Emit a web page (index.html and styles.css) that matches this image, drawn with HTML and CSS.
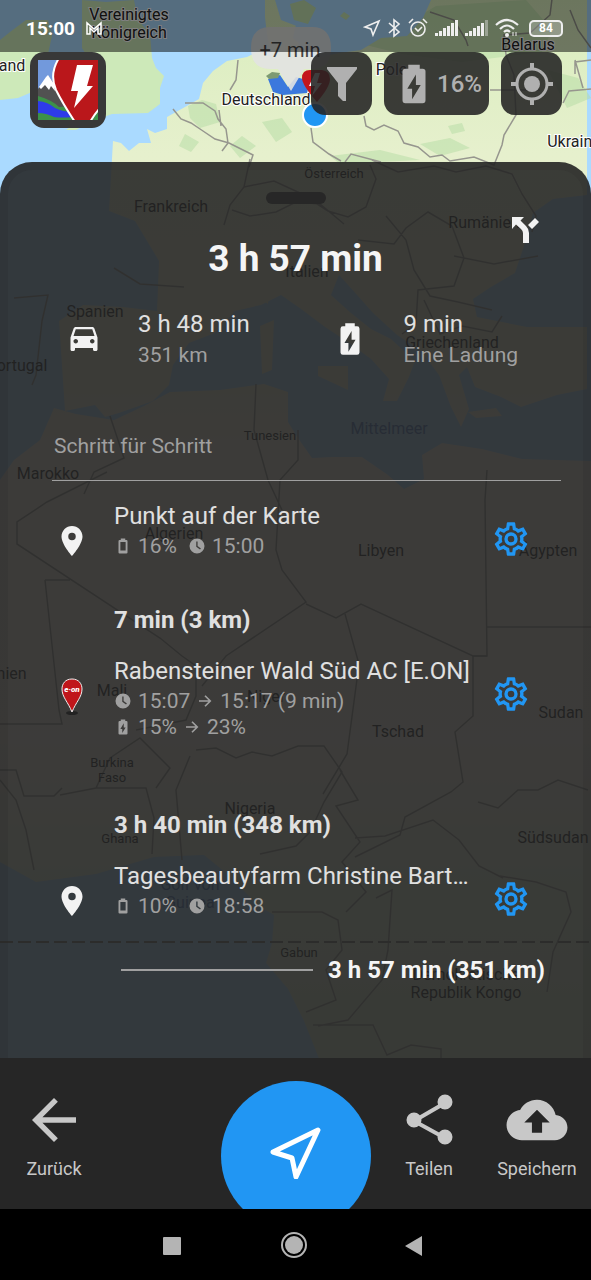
FILE: index.html
```html
<!DOCTYPE html>
<html lang="de">
    <head>
        <meta charset="utf-8">
        <meta name="viewport" content="width=device-width, initial-scale=1">
        <title>Route</title>
        <link rel="stylesheet" href="styles.css">
    </head>
    <body>
        <!-- shared icons -->
        <svg class="sprite" aria-hidden="true">
            <symbol id="gear" viewBox="0 0 24 24">
                <path d="M12 8a4 4 0 0 1 4 4 4 4 0 0 1-4 4 4 4 0 0 1-4-4 4 4 0 0 1 4-4m0 2a2 2 0 0 0-2 2 2 2 0 0 0 2 2 2 2 0 0 0 2-2 2 2 0 0 0-2-2m-2 12c-.25 0-.46-.18-.5-.42l-.37-2.65c-.63-.25-1.17-.59-1.69-.99l-2.49 1.01c-.22.08-.49 0-.61-.22l-2-3.46c-.13-.22-.07-.49.12-.64l2.11-1.66L4.5 12l.07-1-2.11-1.63c-.19-.15-.25-.42-.12-.64l2-3.46c.12-.22.39-.31.61-.22l2.49 1c.52-.39 1.06-.73 1.69-.98l.37-2.65c.04-.24.25-.42.5-.42h4c.25 0 .46.18.5.42l.37 2.65c.63.25 1.17.59 1.69.98l2.49-1c.22-.09.49 0 .61.22l2 3.46c.13.22.07.49-.12.64L19.43 11l.07 1-.07 1 2.11 1.63c.19.15.25.42.12.64l-2 3.46c-.12.22-.39.31-.61.22l-2.49-1c-.52.39-1.06.73-1.69.98l-.37 2.65c-.04.24-.25.42-.5.42h-4m1.25-18-.37 2.61c-1.2.25-2.26.89-3.03 1.78L5.44 7.35l-.75 1.3L6.8 10.2a5.55 5.55 0 0 0 0 3.6l-2.12 1.56.75 1.3 2.43-1.04c.77.88 1.82 1.52 3.01 1.76l.37 2.62h1.52l.37-2.61c1.19-.25 2.24-.89 3.01-1.77l2.43 1.04.75-1.3-2.12-1.55c.4-1.17.4-2.44 0-3.61l2.11-1.55-.75-1.3-2.41 1.04a5.42 5.42 0 0 0-3.03-1.77L12.75 4h-1.5Z"/>
            </symbol>
            <symbol id="pin" viewBox="0 0 24 24">
                <path d="M12 2C8.130 2 5 5.130 5 9c0 5.250 7 13 7 13s7-7.750 7-13c0-3.870-3.130-7-7-7zm0 9.500a2.500 2.500 0 1 1 0-5 2.500 2.500 0 0 1 0 5z"/>
            </symbol>
            <symbol id="charge" viewBox="0 0 24 24">
                <path fill-rule="evenodd" d="M16.500 4H15V2H9v2H7.500Q6 4 6 5.500v15Q6 22 7.500 22h9q1.500 0 1.500-1.500v-15Q18 4 16.500 4zM11 20v-5.500H8.500L13 7v5.500h2.500z"/>
            </symbol>
            <symbol id="battery" viewBox="0 0 24 24">
                <path fill-rule="evenodd" d="M16.500 4H15V2H9v2H7.500Q6 4 6 5.500v15Q6 22 7.500 22h9q1.500 0 1.500-1.500v-15Q18 4 16.500 4zM8.500 6.500h7V18h-7z"/>
            </symbol>
            <symbol id="clock" viewBox="0 0 24 24">
                <path fill-rule="evenodd" d="M12 2a10 10 0 1 0 0 20 10 10 0 0 0 0-20zM11 6h1.800v6l4.400 3.300-1.200 1.500-5-3.900z"/>
            </symbol>
            <symbol id="arrow" viewBox="0 0 24 24">
                <path d="M4 12h15M12 5l7 7-7 7" fill="none" stroke="currentColor" stroke-width="2.200"/>
            </symbol>
            <symbol id="signal" viewBox="0 0 24 18">
                <path d="M0 14h3v3H0zM4 12h3v5H4zM8 9h3v8H8zM12 7h3v10h-3zM16 4h3v13h-3z"/>
            </symbol>
        </svg>

        <svg class="map" viewBox="0 0 591 1280" preserveAspectRatio="xMidYMin slice">
            <defs>
                <linearGradient id="land" x1="0" y1="0" x2="0" y2="1280" gradientUnits="userSpaceOnUse">
                    <stop offset="0" stop-color="#d9edbd"/>
                    <stop offset=".12" stop-color="#e6f0cd"/>
                    <stop offset=".29" stop-color="#ebedcb"/>
                    <stop offset=".36" stop-color="#f5eddc"/>
                    <stop offset=".58" stop-color="#f7eee0"/>
                    <stop offset=".68" stop-color="#dfead0"/>
                    <stop offset=".84" stop-color="#d2e3c1"/>
                </linearGradient>
            </defs>
            <rect width="591" height="1280" fill="#aadaff"/>
            <g fill="url(#land)">
                <!-- British Isles -->
                <path fill="#cde9b9" d="M0 40l10-8 16-12 22 0 4 16-4 18-12 20-4 18-14 6-18 2zM82 0l24 2 28-2 4 20 12 14 2 24 4 10 8 8-4 12 0 16-12 9-36 1-22 8-14 8-10 0 16-12 10-6-14-4 6-14 14-6-10-10 4-14-10-16 0-14z"/>
                <!-- continental Europe -->
                <path d="M113 141l8 2 8 8 10-8 12 0-4-14 8 4 12-4 0-12 18-10 14-8 4-16 10-12 14-10 20-4 12-6 12 6-4-22-2-18 0-17 28 0 4 20-4 18 14 12 22-2 26-12 20 2 28-14 12-30 6-14h166v215l-34 4-20 14-8 30-10 30-24 14-18 12 4 18 50 10 60 0v62l-30 6-36 12-20-10-26-10-8-20-8 8 10 34-8 18-10-20-12-32-18-24-24-16-24-22-16-18-18-20-8 20 20 18 20 16 20 10 24 22-6 16-12 24-14 0 6-22-18-20-22-16-24-16-24-18-20-14-20 10-26 6-20 22-26 10-16 22-4 20-16 16-34 12-14 4-10-12-30 6-6-90 24-16 40 2 34 4 2-50-24-40-26-10z"/>
                <!-- islands -->
                <path d="M260 326l14-6-2 50-10 4zM318 366l30 0 0 24-30-14zM262 284l8 4-2 16-6-4zM468 412l28-4 6 8-26 2z"/>
                <!-- Africa -->
                <path d="M54 408l22 6 38 6 30-14 26-14 50-2 44-6 24 8 0 30 10 16 14 20 20-1 30 0 26 18 16 14 20-10-2-24 20-12 40 6 40 10 69 2v600H320l-16-40-16-32-22-26 6-20 2-28-14-8-34-34-22-18-50 2-58 17-60 8-36-20V480l14-20 26-20z"/>
            </g>
            <g fill="#b3dca4" opacity=".5">
                <path d="M188 106l14-6 14 4 4 18-20 6-10-10zM262 122l20-4 10 14-16 10zM346 40l50-10 40-24 90-6 26 30-10 22-80 10-60-8zM420 144l30-6 20 10-30 8zM330 156l50-6 40 10-80 4zM548 70l30 8 13 20-24 10zM448 126l14-3 3 8-13 3zM185 134l14 8-8 10-12-6zM230 146l12-10 14 10-16 12z"/>
            </g>
            <path fill="#aadaff" d="M275 0h156l-8 18-16 18-26 2-20 12-22 3-24 5-18-10 10-18-26-10z"/>
            <path fill="#c4e2b0" d="M290 4l14-4 12 8-8 16-14-4zM340 16l4-4 6 4-4 4z"/>
            <g class="borders">
                <path d="M185 103l18 0 12 8 3 8 8 10 2 14-6 8M173 109l8 10 10 4 12 8 12 8 14 4 24 12-4 12M238 60l-2 20-6 10M219 110l2 16M364 116l2 10 8 4 10-5 14 6 6 12 14 4 12 10 12-2 8 6 24-4 20 8 8-20 2-10 12-20-2-40-8-20-2-20 26-2 20-18 2-16 8-14M430 12l24 8 12 20 2 6M311 128l2 14 16 12 12 7M345 162l6-8 30 8M490 90l50 0M563 103l6-12 22-2M575 74l0-12 16-2M570 10l8 20 13 18M575 60l8 28"/>
                <path d="M224 225l6-20 14-18 6-28M232 210l18 6 26-4 20-10 24 2 24 20M244 187l30-6 26 12 28 18 20 6 18-10 10-28-6-14M372 160l26 12 36-6 22 6 30-6 26 8 10 20 14 22-4 16M358 240l36 4 12-16 22-16 24 14 12 32-10 28-36 4-2 34-14 10M386 216l20 24 8 30 16 26 28 6 34 8M454 256l40 8 44-8M424 300l16 34 22-8 30 6 10-16M114 268l26 16 44 3M14 298l34-3-6 26-6 54-4 10M110 416l14 42-30 14-10 22M256 384l-2 46 14 50 14 30M298 430v30l-18 20-4 70 6 20 24 32-80 54-24 30M182 656l-22-18L17 544V522l30-20 60-30M45 580h25M45 580l14 130 3 14H0M487 470l-2 30 2 156h-14l-112-52-25 14-30-14M487 627h104M345 614l14 50-12 90-24 40M182 656l14 10v30l-10 24-50 10"/>
                <path d="M487 656l-14 0 0 60-18 16 8 50-12 10-46 25-5 18-45 22M196 750l20-2 20 10 16-6 20 4 26-10 26 0 18 26-18 30-14 30-14 14-36 8M182 860l-6-70 14-34M96 788h50l8 30-2 36M60 795l36-7 14-30 30-20 30 30-14 20M0 770l16 0 8 26 30 0 8-8 M0 780l16 20 10 30 8 40M340 770l18 30-22 6 24 36-18 20 24 30-20 20M355 838l30-2 48-16 26 20 20 26 24 12M376 898l16-8-4 60-6 30-34 40-30 6M272 912l50 0 16 8 4 30-16 20 10 30-30 12M313 1025l60 0 14 30 24-10 30 4v20M500 876l36 6 30 10 5 20-18 40-6 40M478 802l20 6 20-18 20 0 20-10 30 10"/>
            </g>
            <path class="equator" d="M0 942h591"/>
            <!-- country names -->
            <g class="country halo">
                <text x="129" y="20">Vereinigtes</text>
                <text x="129" y="38">Königreich</text>
                <text x="12" y="71">and</text>
                <text x="528" y="50">Belarus</text>
                <text x="266" y="105">Deutschland</text>
                <text x="396" y="75">Polen</text>
                <text x="574" y="147">Ukraine</text>
            </g>
            <g class="country">
                <text x="171" y="212">Frankreich</text>
                <text x="484" y="228">Rumänien</text>
                <text x="307" y="277">Italien</text>
                <text x="95" y="317">Spanien</text>
                <text x="452" y="348">Griechenland</text>
                <text x="17" y="371">Portugal</text>
                <text x="48" y="479">Marokko</text>
                <text x="174" y="539">Algerien</text>
                <text x="381" y="556">Libyen</text>
                <text x="548" y="556">Ägypten</text>
                <text x="112" y="696">Mali</text>
                <text x="266" y="702">Niger</text>
                <text x="398" y="737">Tschad</text>
                <text x="561" y="718">Sudan</text>
                <text x="-18" y="679">Mauretanien</text>
                <text x="250" y="814">Nigeria</text>
                <text x="553" y="843">Südsudan</text>
                <text x="466" y="980">Demokratische</text>
                <text x="466" y="998">Republik Kongo</text>
                <text class="sea" x="389" y="434">Mittelmeer</text>
                <text class="sea" x="190" y="890">Golf von</text>
                <text class="sea" x="190" y="908">Guinea</text>
            </g>
            <g class="country small">
                <text x="334" y="178">Österreich</text>
                <text x="270" y="440">Tunesien</text>
                <text x="112" y="767">Burkina</text>
                <text x="112" y="782">Faso</text>
                <text x="120" y="843">Ghana</text>
                <text x="299" y="957">Gabun</text>
            </g>
            <!-- route markers -->
            <path fill="#3b78dd" d="M268 79l12-4 8 12 8-10 14 4-3 12-24 2-10-3z"/>
            <path fill="#7d9b72" d="M266 76l6-4 8 1-2 5-9 1z"/>
            <path fill="#c4161c" d="M302 78q0-8 8-8h12q8 1 8 9 0 8-13 23-15-17-15-24z"/>
            <path fill="#fff" d="M315 73l-6 13h6l-3 10 10-13h-5l3-10z"/>
            <circle cx="315" cy="115" r="12" fill="#2196f3" stroke="#fff" stroke-width="2"/>
            <path class="bubble" d="M270 27h42q19 0 19 21t-19 21h-8L291 91l-13-22h-8q-19 0-19-21t19-21z"/>
            <text class="delay" x="290" y="57">+7 min</text>
        </svg>

        <header class="status">
            <span class="time">15:00</span>
            <svg class="mail" width="18" height="14" viewBox="0 0 18 14"><path d="M2 13V2l7 6 7-6v11h-3V7l-4 4-4-4v6z" fill="none" stroke="#fff" stroke-width="1.500"/></svg>
            <div class="status-icons">
                <svg width="18" height="18" viewBox="0 0 18 18"><path d="M2 8L16 2l-6 14-2-6z" fill="none" stroke="#eee" stroke-width="1.600"/></svg>
                <svg width="13" height="20" viewBox="0 0 13 20"><path d="M1 5l10 9-5 4V2l5 4-10 9" fill="none" stroke="#eee" stroke-width="1.600"/></svg>
                <svg width="20" height="20" viewBox="0 0 20 20"><g fill="none" stroke="#eee" stroke-width="1.600"><circle cx="10" cy="11" r="7"/><path d="M1 5l4-4M19 5l-4-4M7 10l3 3 4-4"/></g></svg>
                <svg width="23" height="18" viewBox="0 0 23 18" fill="#eee"><use href="#signal" width="24" height="18"/><path d="M20 1h3v16h-3z"/></svg>
                <svg width="23" height="18" viewBox="0 0 23 18" fill="#eee"><use href="#signal" width="24" height="18"/><path opacity=".4" d="M20 1h3v16h-3z"/></svg>
                <svg width="25" height="20" viewBox="0 0 25 20"><g fill="none" stroke="#eee" stroke-width="2.200"><path d="M1 7q11-10 22 0M5 11q7-7 14 0M9 14q3-3 6 0"/><path stroke-width="1" d="M18 14v4M21 14v4"/></g><circle cx="12" cy="17" r="2" fill="#eee"/></svg>
                <span class="level">84</span>
            </div>
        </header>

        <div class="tools">
            <button class="logo" aria-label="Menü">
                <svg width="60" height="60" viewBox="0 0 60 60">
                    <rect width="60" height="60" fill="#7299dc"/>
                    <path fill="#515151" d="M0 29L10 16l8 10 16 22-14 2L0 38z"/>
                    <path fill="#fff" d="M1 27l7-10 2-2 6 9 1 7-4-5-2 4-4-5-4 4z"/>
                    <path fill="#3d9149" d="M0 36q14 4 21 11l14-1v14H0z"/>
                    <path fill="#2e3bea" d="M0 41q10 1 17 7 8 4 18 4v5q-12 1-19 0-8-4-16-4z"/>
                    <path fill="#3d9149" d="M60 46v14H48z"/>
                    <path fill="#ba171b" stroke="#fff" stroke-width="2" d="M21-2q-10 16-3 32 7 14 19 32h15q4-7 10-14V-2z"/>
                    <path fill="#fff" d="M39 5h16l-6 21h6L36 48l4-17h-7z"/>
                </svg>
            </button>
            <button class="tool" aria-label="Filter">
                <svg width="30" height="34" viewBox="0 0 30 34" fill="#b0b0b0"><path d="M0 0h30v2L19 16v18h-3l-5-5V16L0 2z"/></svg>
            </button>
            <button class="tool">
                <svg width="46" height="46" viewBox="0 0 24 24" fill="#b0b0b0"><use href="#charge"/></svg>
                <span>16%</span>
            </button>
            <button class="tool" aria-label="Standort">
                <svg width="42" height="42" viewBox="0 0 42 42"><g fill="none" stroke="#b0b0b0" stroke-width="3"><circle cx="21" cy="21" r="15"/><path d="M21 0v7M21 35v7M0 21h7M35 21h7" stroke-width="4"/></g><circle cx="21" cy="21" r="8" fill="#b0b0b0"/></svg>
            </button>
        </div>

        <main class="panel">
            <div class="handle"></div>
            <button class="alternatives" aria-label="Alternative Routen">
                <svg width="28" height="28" viewBox="0 0 28 28" fill="#f2f2f2"><path d="M1 1h12L9.500 4.500 15 10q3 3 3 7v10h-6V17q0-2-2-4L5 8.500 1 13zM17 9l7-7 4 4-7 7z"/></svg>
            </button>
            <h1>3 h 57 min</h1>

            <div class="summary">
                <div class="fact">
                    <svg width="36" height="36" viewBox="0 0 24 24" fill="#f2f2f2"><path d="M18.920 5.010C18.720 4.420 18.160 4 17.500 4h-11c-.660 0-1.210.420-1.420 1.010L3 11v8c0 .550.450 1 1 1h1c.550 0 1-.450 1-1v-1h12v1c0 .550.450 1 1 1h1c.550 0 1-.450 1-1v-8l-2.080-5.990zM6.500 15c-.830 0-1.500-.670-1.500-1.500S5.670 12 6.500 12s1.500.670 1.500 1.500S7.330 15 6.500 15zm11 0c-.830 0-1.500-.670-1.500-1.500s.670-1.500 1.500-1.500 1.500.670 1.500 1.500-.670 1.500-1.500 1.500zM5 10l1.500-4.500h11L19 10H5z"/></svg>
                    <p>3 h 48 min<small>351 km</small></p>
                </div>
                <div class="fact">
                    <svg width="38" height="38" fill="#f2f2f2"><use href="#charge"/></svg>
                    <p>9 min<small>Eine Ladung</small></p>
                </div>
            </div>

            <h2>Schritt für Schritt</h2>

            <div class="stop">
                <svg class="marker" width="36" height="36"><use href="#pin"/></svg>
                <div class="info">
                    <h3>Punkt auf der Karte</h3>
                    <p><svg class="icon"><use href="#battery"/></svg>16% <svg class="icon second"><use href="#clock"/></svg>15:00</p>
                </div>
                <button class="settings" aria-label="Einstellungen"><svg width="40" height="40"><use href="#gear"/></svg></button>
            </div>
            <p class="leg">7 min (3 km)</p>

            <div class="stop charging">
                <svg class="marker" width="26" height="38" viewBox="0 0 26 38">
                    <ellipse cx="13" cy="35" rx="6" ry="2" fill="#222"/>
                    <path fill="#c0161b" stroke="#eee" d="M13 1C6 1 3 6 3 11c0 8 6 13 10 23 4-10 10-15 10-23 0-5-3-10-10-10z"/>
                    <text class="brand" x="13" y="14">e·on</text>
                </svg>
                <div class="info">
                    <h3>Rabensteiner Wald Süd AC [E.ON]</h3>
                    <p><svg class="icon"><use href="#clock"/></svg>15:07 <svg class="to"><use href="#arrow"/></svg> 15:17 (9 min)</p>
                    <p><svg class="icon"><use href="#charge"/></svg>15% <svg class="to"><use href="#arrow"/></svg> 23%</p>
                </div>
                <button class="settings" aria-label="Einstellungen"><svg width="40" height="40"><use href="#gear"/></svg></button>
            </div>
            <p class="leg">3 h 40 min (348 km)</p>

            <div class="stop">
                <svg class="marker" width="36" height="36"><use href="#pin"/></svg>
                <div class="info">
                    <h3>Tagesbeautyfarm Christine Bartholomäus</h3>
                    <p><svg class="icon"><use href="#battery"/></svg>10% <svg class="icon second"><use href="#clock"/></svg>18:58</p>
                </div>
                <button class="settings" aria-label="Einstellungen"><svg width="40" height="40"><use href="#gear"/></svg></button>
            </div>
            <p class="total">3 h 57 min (351 km)</p>
        </main>

        <nav class="actions">
            <button class="action">
                <svg width="66" height="66" viewBox="0 0 24 24"><path fill="#c8c8c8" d="M20 11H7.800l5.600-5.600L12 4l-8 8 8 8 1.400-1.400L7.800 13H20z"/></svg>
                Zurück
            </button>
            <button class="start" aria-label="Navigation starten">
                <svg width="52" height="52" viewBox="0 0 52 52"><path d="M3 25L48 3 26 50l-4-19z" fill="none" stroke="#fff" stroke-width="5" stroke-linejoin="round"/></svg>
            </button>
            <div class="right">
                <button class="action">
                    <svg width="66" height="66" viewBox="0 0 66 66"><g fill="#c8c8c8" stroke="#c8c8c8" stroke-width="4"><path d="M49 16L18 34l31 17" fill="none"/><circle cx="49" cy="15" r="5.500"/><circle cx="18" cy="33" r="5.500"/><circle cx="49" cy="50" r="5.500"/></g></svg>
                    Teilen
                </button>
                <button class="action">
                    <svg width="66" height="66" viewBox="0 0 26 26"><path fill="#c8c8c8" d="M20.350 11.040C19.670 7.590 16.640 5 13 5c-2.890 0-5.400 1.640-6.650 4.040C3.340 9.360 1 11.910 1 15c0 3.310 2.690 6 6 6h13c2.760 0 5-2.240 5-5 0-2.640-2.050-4.780-4.650-4.960zM15 14v4h-4v-4H8l5-5 5 5h-3z"/></svg>
                    Speichern
                </button>
            </div>
        </nav>

        <footer class="system">
            <button aria-label="Übersicht"><svg width="28" height="28"><rect x="5" y="6" width="18" height="18" rx="1" fill="#b4b4b4"/></svg></button>
            <button aria-label="Home"><svg width="28" height="28"><circle cx="14" cy="14" r="12" fill="none" stroke="#b4b4b4" stroke-width="2"/><circle cx="14" cy="14" r="9" fill="#b4b4b4"/></svg></button>
            <button aria-label="Zurück"><svg width="28" height="28"><path d="M3 15l17-10v20z" fill="#b4b4b4"/></svg></button>
        </footer>
    </body>
</html>
```

FILE: styles.css
```css
* {
    box-sizing: border-box;
}

body {
    display: flex;
    flex-direction: column;
    position: relative;
    min-height: 100vh;
    margin: 0;
    background-color: #000000;
    color: #E0E0E0;
    font-family: Roboto, "Liberation Sans", sans-serif;
    font-size: 24px;
}

h1, h2, h3, p {
    margin: 0;
}

svg {
    flex: none;
}

button {
    padding: 0;
    border: none;
    background: none;
    color: inherit;
    font: inherit;
}

.sprite {
    position: absolute;
    width: 0;
    height: 0;
}

/* map behind everything */
.map {
    position: absolute;
    top: 0;
    left: 0;
    z-index: -1;
    width: 100%;
    height: 100%;
}

.borders {
    fill: none;
    stroke: #96968E;
    stroke-width: 1.5px;
}

.equator {
    stroke: #77776F;
    stroke-width: 2px;
    stroke-dasharray: 13 5;
}

.country {
    fill: #222222;
    font-size: 17px;
    text-anchor: middle;
}

.country:not(.small) {
    font-size: 16px;
}

.halo {
    stroke: #FFFFFF;
    stroke-width: 2px;
    paint-order: stroke;
}

.small {
    font-size: 13px;
}

.sea {
    fill: #4A76B8;
}

.bubble {
    fill: #E2E2E2;
    opacity: 0.9;
}

.delay {
    fill: #444444;
    font-size: 20px;
    text-anchor: middle;
}

/* status bar */
.status {
    display: flex;
    align-items: center;
    height: 52px;
    padding: 4px 24px 0 26px;
    background-color: rgba(0, 0, 0, 0.5);
}

.time {
    margin-right: 10px;
    color: #FFFFFF;
    font-size: 19px;
    font-weight: bold;
}

.status-icons {
    display: flex;
    align-items: center;
    gap: 7px;
    margin-left: auto;
}

.level {
    width: 34px;
    height: 17px;
    margin: 0 4px 0 2px;
    border: 2px solid #EEEEEE;
    border-radius: 5px;
    background-color: rgba(255, 255, 255, 0.25);
    color: #FFFFFF;
    font-size: 12px;
    font-weight: bold;
    line-height: 13px;
    text-align: center;
}

/* buttons on the map */
.tools {
    display: flex;
    align-items: flex-start;
    gap: 12px;
    height: 110px;
    padding: 0 29px 0 30px;
}

.logo {
    width: 76px;
    height: 76px;
    margin-right: auto;
    padding: 8px;
    border-radius: 14px;
    background-color: #383838;
}

.logo svg {
    display: block;
}

.tool {
    display: flex;
    align-items: center;
    justify-content: center;
    min-width: 61px;
    height: 63px;
    padding: 0 7px;
    border-radius: 14px;
    background-color: rgba(34, 34, 34, 0.88);
    color: #B0B0B0;
    font-weight: 500;
}

/* route panel */
.panel {
    position: relative;
    flex: 1;
    padding: 22px 22px 38px;
    border: 8px solid rgba(34, 34, 34, 0.15);
    border-bottom: none;
    border-radius: 32px 32px 0 0;
    background-color: rgba(34, 34, 34, 0.88);
}

.handle {
    width: 60px;
    height: 12px;
    margin: 0 auto;
    border-radius: 6px;
    background-color: #272727;
}

.alternatives {
    position: absolute;
    top: 46px;
    right: 44px;
}

h1 {
    margin-top: 33px;
    color: #F5F5F5;
    font-size: 37px;
    line-height: 44px;
    text-align: center;
}

.summary {
    display: grid;
    grid-template-columns: 1fr 1fr;
    margin-top: 27px;
}

.fact {
    display: grid;
    grid-template-columns: 108px 1fr;
    align-items: center;
}

.fact svg {
    justify-self: center;
}

.fact p {
    line-height: 32px;
}

small {
    display: block;
    color: #A0A0A0;
    font-size: 21px;
    line-height: 30px;
}

h2 {
    margin: 62px 0 18px 22px;
    padding: 0 2px 20px;
    border-bottom: 1px solid #A0A0A0;
    color: #A0A0A0;
    font-size: 21px;
    font-weight: normal;
    line-height: 28px;
}

.stop {
    display: grid;
    grid-template-columns: 84px 1fr 80px;
    align-items: start;
    padding: 0 10px 27px 0;
}

.charging {
    padding-bottom: 51px;
}

.marker {
    justify-self: center;
    margin-top: 24px;
    fill: #F2F2F2;
}

.brand {
    fill: #FFFFFF;
    font-size: 8px;
    font-weight: 900;
    font-style: italic;
    text-anchor: middle;
}

.info {
    min-width: 0;
}

h3 {
    overflow: hidden;
    font-size: 24px;
    font-weight: normal;
    line-height: 34px;
    text-overflow: ellipsis;
    white-space: nowrap;
}

.info p {
    display: flex;
    align-items: center;
    color: #A0A0A0;
    font-size: 21px;
    line-height: 26px;
}

.icon {
    width: 18px;
    height: 18px;
    margin-right: 6px;
    fill: #A0A0A0;
}

.second {
    margin-left: 11px;
}

.to {
    width: 18px;
    height: 18px;
    margin: 0 6px;
}

.settings {
    justify-self: center;
    width: 40px;
    height: 40px;
    margin-top: 20px;
    fill: #2196F3;
}

.settings svg {
    display: block;
}

.leg {
    padding-left: 84px;
    font-weight: bold;
    line-height: 68px;
}

.total {
    display: flex;
    align-items: center;
    gap: 15px;
    padding: 9px 16px 0 91px;
    color: #F5F5F5;
    font-weight: bold;
    line-height: 30px;
}

.total::before {
    content: "";
    flex: 1;
    height: 2px;
    background-color: #A0A0A0;
}

/* bottom actions */
.actions {
    display: grid;
    grid-template-columns: 1fr 150px 1fr;
    align-items: start;
    height: 151px;
    overflow: hidden;
    background-color: #262626;
}

.action {
    display: flex;
    flex-direction: column;
    align-items: center;
    width: 108px;
    padding-top: 29px;
    color: #C8C8C8;
    font-size: 18px;
    line-height: 32px;
}

.start {
    height: 150px;
    margin-top: 23px;
    border-radius: 50%;
    background-color: #2196F3;
}

.right {
    display: flex;
    justify-content: flex-end;
}

/* android buttons */
.system {
    display: flex;
    align-items: center;
    justify-content: center;
    height: 71px;
    padding-right: 4px;
    background-color: #000000;
}

.system button {
    width: 122px;
    height: 28px;
}
```
